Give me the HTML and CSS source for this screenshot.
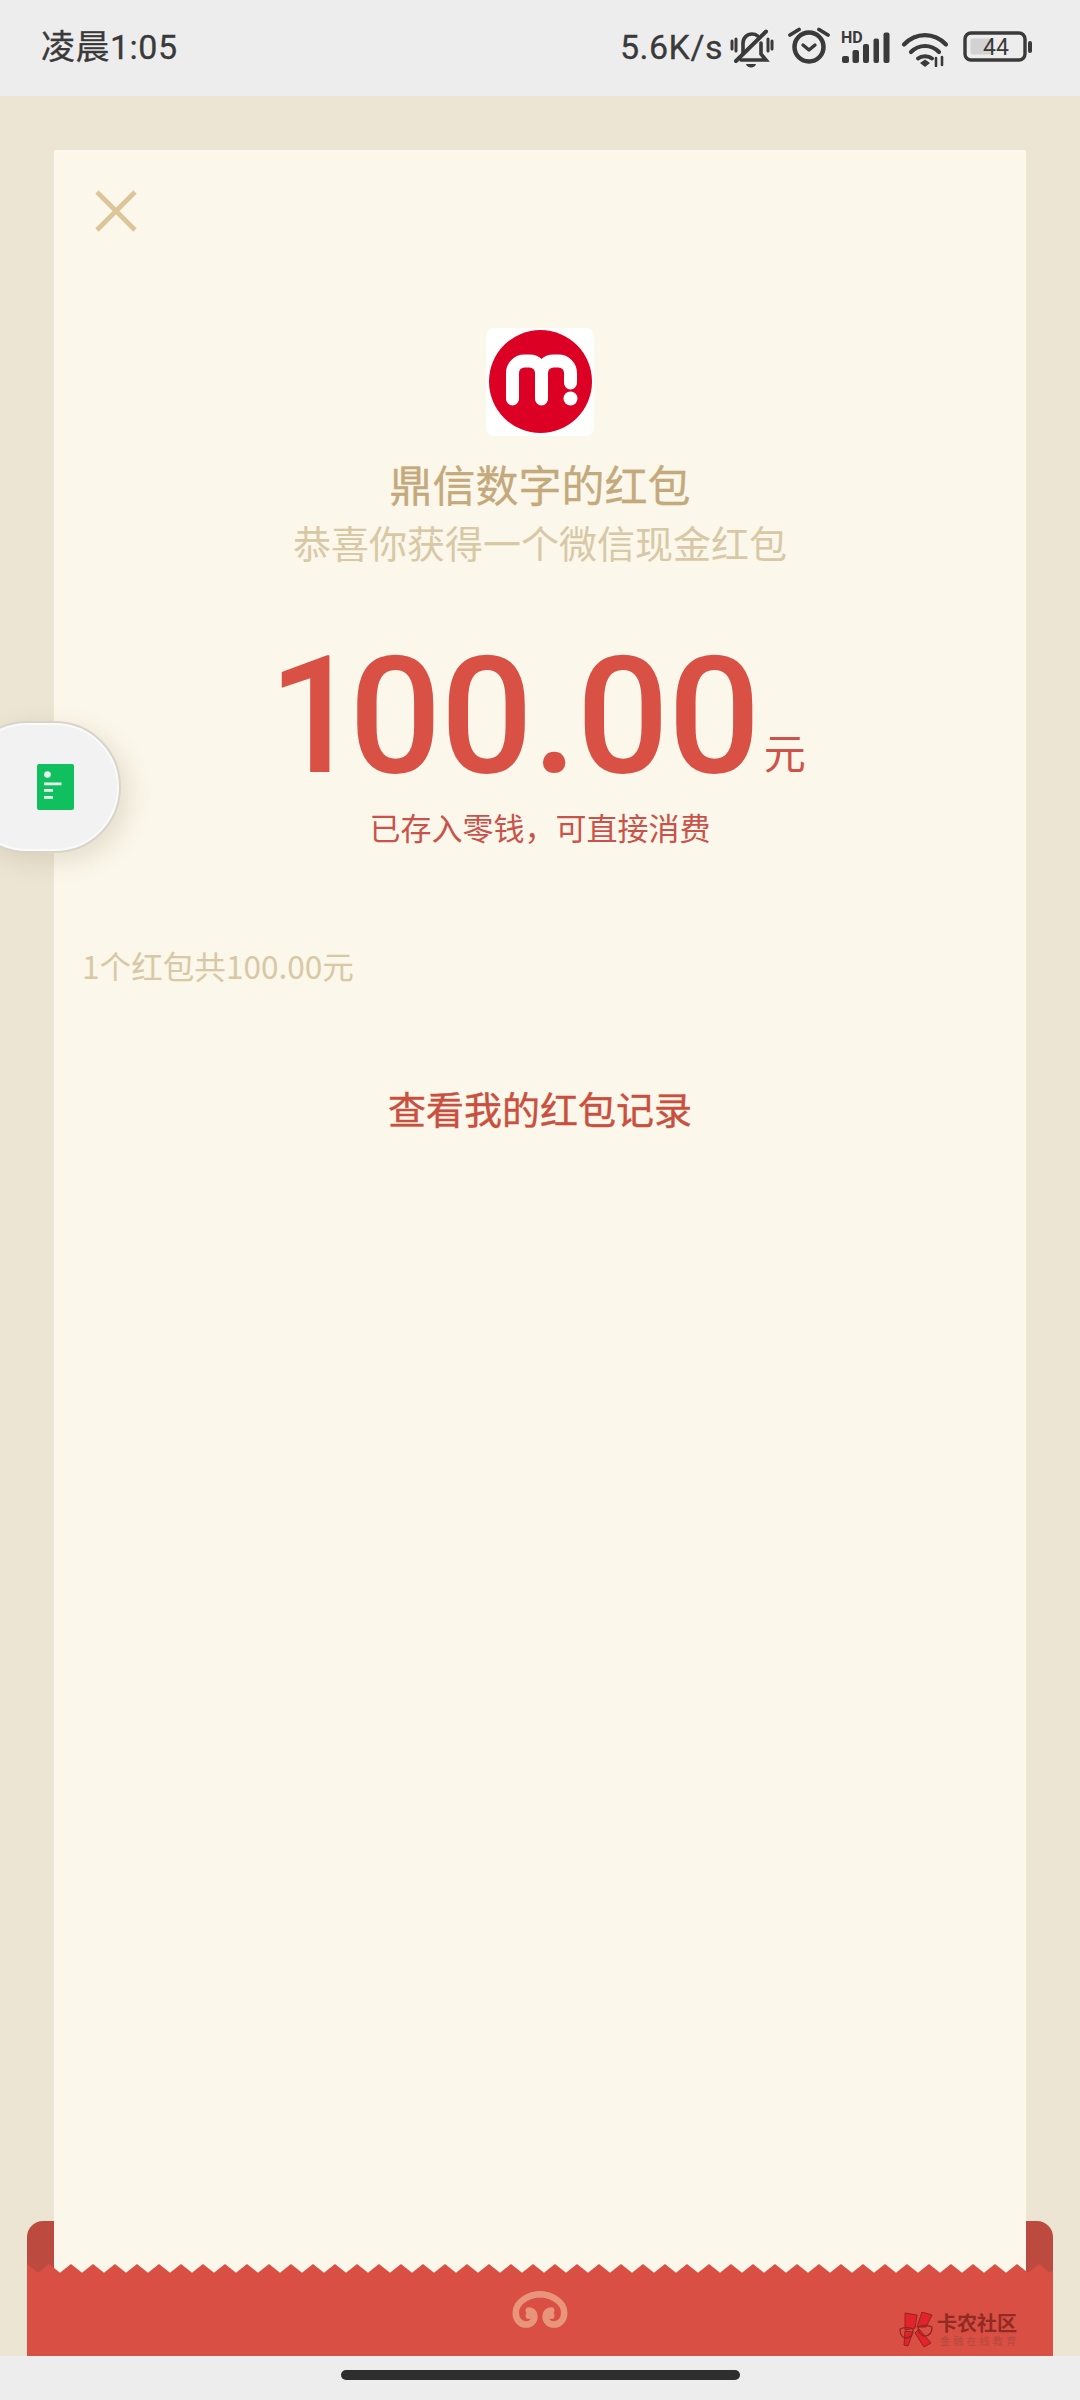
FILE: index.html
```html
<!DOCTYPE html>
<html lang="zh-CN">
<head>
<meta charset="utf-8">
<title>微信红包</title>
<link rel="stylesheet" href="styles.css">
</head>
<body>
<div class="phone">
  <header class="status">
    <span class="time">凌晨1:05</span>
    <div class="status-right">
      <span class="speed">5.6K/s</span>
      <svg class="ic-bell" viewBox="0 0 48 42" fill="none" stroke="#3a3a3a" stroke-linecap="round">
        <path d="M4 13v8M8 11v12M40 11v12M44 13v8" stroke-width="3"/>
        <path d="M15 26V15c0-5 4-9 9-9 2 0 4 .6 5.500 1.800M33 15v11l5 6H13" stroke-width="3.600"/>
        <path d="M8 33 38 3.500" stroke-width="4"/>
        <path d="M18 36h10c-.5 2-2.500 3.500-5 3.500s-4.500-1.500-5-3.500z" fill="#3a3a3a" stroke="none"/>
      </svg>
      <svg class="ic-alarm" viewBox="0 0 46 40" fill="none" stroke="#3a3a3a" stroke-linecap="round">
        <circle cx="23" cy="20" r="14.500" stroke-width="4.500"/>
        <path d="M4 8 13 2.500M33 2.500 42 8" stroke-width="3.800"/>
        <path d="M17 18 23 23 29 18" stroke-width="3.400" stroke-linejoin="round"/>
      </svg>
      <svg class="ic-signal" viewBox="0 0 50 34" fill="#3a3a3a">
        <text class="hd" x="1" y="13">HD</text>
        <rect x="2" y="26" width="7" height="7" rx="2"/>
        <rect x="12.500" y="20" width="6.500" height="13" rx="2"/>
        <rect x="23" y="14" width="6" height="19" rx="2"/>
        <rect x="33.500" y="8.500" width="5.500" height="24.500" rx="2"/>
        <rect x="43.500" y="2.500" width="6" height="30.500" rx="2"/>
      </svg>
      <svg class="ic-wifi" viewBox="0 0 48 36" fill="none" stroke="#3a3a3a" stroke-linecap="round">
        <path d="M3 13.500C15 1 33 1 45 13.500" stroke-width="4.200"/>
        <path d="M10 21c8-8 20-8 28 0" stroke-width="4.200"/>
        <path d="M17 27.500c3.500-3 10.500-3 14 0" stroke-width="4"/>
        <path d="M24 28.500 29 32 24 36 19 32z" fill="#3a3a3a" stroke="none"/>
        <path d="M35 27v8M41 26v8" stroke-width="2.600"/>
      </svg>
      <svg class="ic-batt" viewBox="0 0 70 32">
        <rect x="2" y="2" width="60" height="27" rx="6" fill="none" stroke="#3a3a3a" stroke-width="3.400"/>
        <rect x="7.500" y="7.500" width="21" height="16" rx="2" fill="#d2d2d2"/>
        <rect x="65" y="10" width="4" height="12" rx="2" fill="#3a3a3a"/>
        <text class="batt-num" x="33" y="24" text-anchor="middle">44</text>
      </svg>
    </div>
  </header>

  <main class="sheet">
    <div class="band-back"></div>
    <section class="card">
      <svg class="close" viewBox="0 0 42 42" fill="none" stroke="#dcc599" stroke-width="4.600">
        <path d="M2 2 40 40M40 2 2 40"/>
      </svg>
      <div class="logo">
        <svg viewBox="0 0 108 108" width="108" height="108">
          <circle cx="54.500" cy="53.500" r="51.500" fill="#dc0025"/>
          <path d="M26.500 71V45a12 12 0 0 1 12-12h5a12 12 0 0 1 12 12v26M55.500 45a12 12 0 0 1 12-12h5a12 12 0 0 1 12 12v10" fill="none" stroke="#fff" stroke-width="13" stroke-linecap="round"/>
          <circle cx="84.500" cy="70.500" r="7" fill="#fff"/>
        </svg>
      </div>
      <h1 class="title">鼎信数字的红包</h1>
      <p class="subtitle">恭喜你获得一个微信现金红包</p>
      <div class="amount-row">
        <span class="amount"><span class="amount-one">1</span>00.00</span>
        <span class="unit">元</span>
      </div>
      <p class="note">已存入零钱，可直接消费</p>
      <p class="summary">1个红包共100.00元</p>
      <a class="record">查看我的红包记录</a>
    </section>
    <div class="band">
      <svg class="band-shape" width="1026" height="92">
        <defs>
          <pattern id="zig" width="22" height="92" patternUnits="userSpaceOnUse">
            <path d="M0 0 11 8.700 22 0V92H0z" fill="#d94f43"/>
          </pattern>
        </defs>
        <rect width="1026" height="92" fill="url(#zig)"/>
      </svg>
      <svg class="swirl" viewBox="0 0 60 44" fill="none" stroke="#e9957b" stroke-width="7" stroke-linecap="round">
        <path d="M30 3C21 3 4 9 4 23c0 8 6 12.500 11 12.500 5.500 0 9-4 9-9 0-4-3-6-6-6"/>
        <path d="M30 3c9 0 26 6 26 20 0 8-6 12.500-11 12.500-5.500 0-9-4-9-9 0-4 3-6 6-6"/>
        <circle cx="18" cy="26" r="3.500" fill="#e9957b" stroke="none"/>
        <circle cx="42" cy="26" r="3.500" fill="#e9957b" stroke="none"/>
      </svg>
      <div class="mark">
        <svg class="mark-logo" viewBox="0 0 36 36">
          <path d="M6 1 18 3 16 16 6 18z" fill="#e2232b" stroke="#93261f" stroke-width="1"/>
          <path d="M23 0 33 3 27 15 18 15z" fill="#e2232b" stroke="#93261f" stroke-width="1"/>
          <path d="M6 19 14 20 9 34 5 33zM16 21 20 17 32 31 25 35z" fill="#e2232b" stroke="#93261f" stroke-width="1"/>
          <path d="M1 17c4-2 10-2 13 0 0 6-3 9-7 9s-6-4-6-9zM19 15c4-2 10-2 14 0 0 6-3 9-7 9s-7-4-7-9z" fill="none" stroke="#93261f" stroke-width="1.300"/>
        </svg>
        <div class="mark-text">
          <span class="mark-name">卡农社区</span>
          <span class="mark-sub">金融在线教育</span>
        </div>
      </div>
    </div>
  </main>

  <footer class="navbar"><span class="home-pill"></span></footer>

  <aside class="float-pill">
    <svg class="float-icon" viewBox="0 0 37 46">
      <rect width="37" height="46" rx="2" fill="#10bf5e"/>
      <circle cx="10.500" cy="10.500" r="3.300" fill="#e8f8ee"/>
      <path d="M7 18.500h17.500v2.800H7zM7 25h9v2.800H7zM7 32h9v2.800H7z" fill="#e8f8ee"/>
    </svg>
  </aside>
</div>
</body>
</html>
```
FILE: styles.css
```css
* { box-sizing: border-box; }
html, body { margin: 0; padding: 0; }
body { font-family: "Noto Sans CJK SC", "Noto Sans", sans-serif; background: #ededed; }
p, h1 { margin: 0; font-weight: 400; }

.phone { position: relative; width: 1080px; height: 2400px; overflow: hidden; display: flex; flex-direction: column; background: #ededed; }

/* status bar */
.status { height: 96px; flex: none; display: flex; align-items: center; justify-content: space-between; padding: 0 47px 2px 41px; color: #3a3a3a; }
.time { font-family: Roboto, "Noto Sans CJK SC", sans-serif; font-size: 34px; line-height: 40px; font-weight: 400; letter-spacing: .5px; -webkit-text-stroke: .3px #3a3a3a; }
.status-right { display: flex; align-items: center; }
.speed { font-family: Roboto, sans-serif; font-size: 34px; line-height: 40px; letter-spacing: .5px; margin-right: 5px; -webkit-text-stroke: .3px #3a3a3a; }
.ic-bell { width: 48px; height: 42px; margin-right: 10px; margin-top: 4px; }
.ic-alarm { width: 46px; height: 40px; margin-right: 8px; margin-top: 0; }
.ic-signal { width: 50px; height: 34px; margin-right: 11px; overflow: visible; }
.ic-wifi { width: 48px; height: 36px; margin-right: 14px; margin-top: 4px; }
.ic-batt { width: 70px; height: 32px; margin-top: -1px; }
.hd { font-family: Roboto, sans-serif; font-size: 16px; font-weight: 700; }
.batt-num { font-family: Roboto, sans-serif; font-size: 23px; fill: #3a3a3a; }

/* body */
.sheet { position: relative; flex: 1; display: flex; flex-direction: column; padding-top: 54px; background: #ece5d3; }
.band-back { position: absolute; left: 27px; right: 27px; bottom: 60px; height: 75px; background: #bd4a3e; border-radius: 16px 16px 0 0; }

.card { position: relative; z-index: 1; flex: 1; margin: 0 54px -9px; padding-top: 178px; display: flex; flex-direction: column; align-items: center; background: #fbf7ea; }
.close { position: absolute; left: 41px; top: 40px; width: 42px; height: 42px; }
.logo { width: 108px; height: 108px; background: #fff; border-radius: 8px; }
.logo svg { display: block; }
.title { margin-top: 16px; font-size: 43px; line-height: 63px; color: #c4a97c; -webkit-text-stroke: .3px #c4a97c; }
.subtitle { font-size: 38px; line-height: 54px; color: #d8c8a6; }
.amount-row { margin: 73px 6px 0 0; display: flex; align-items: flex-end; gap: 4px; height: 150px; }
.amount { font-family: Roboto, sans-serif; font-size: 163px; line-height: 150px; font-weight: 500; letter-spacing: -1px; color: #d95045; }
.amount-one { letter-spacing: -12px; }
.unit { font-size: 42px; line-height: 50px; margin-bottom: 16px; color: #d0534a; }
.note { margin-top: 13px; font-size: 31px; line-height: 44px; color: #c9524a; }
.summary { align-self: flex-start; margin: 93px 0 0 28px; font-size: 31.600px; line-height: 46px; color: #d8c8a5; }
.record { margin-top: 92px; font-size: 38px; line-height: 56px; color: #c9503f; -webkit-text-stroke: .4px #c9503f; }

/* red band */
.band { position: relative; z-index: 2; flex: none; height: 92px; margin: 0 27px; }
.band-shape { display: block; }
.swirl { position: absolute; left: 485px; top: 27px; width: 56px; height: 42px; }
.mark { position: absolute; left: 872px; top: 48px; display: flex; align-items: flex-start; gap: 2px; }
.mark-logo { width: 36px; height: 36px; flex: none; }
.mark-text { display: flex; flex-direction: column; }
.mark-name { font-size: 20px; line-height: 22px; font-weight: 700; color: #8f2a24; }
.mark-sub { font-size: 10px; line-height: 14px; letter-spacing: 3.200px; color: #b5493e; padding-left: 3px; }

/* nav */
.navbar { flex: none; height: 44px; display: flex; justify-content: center; padding-top: 14px; }
.home-pill { width: 399px; height: 10px; border-radius: 5px; background: #2e2e2e; }

/* floating pill */
.float-pill { position: absolute; z-index: 3; left: -39px; top: 721px; width: 160px; height: 132px; display: flex; align-items: center; padding-left: 74px; border-radius: 66px; background: #f2f2f2; border: 2px solid #d9d4c8; box-shadow: inset 0 0 0 2px #fafafa, 8px 8px 24px rgba(110, 95, 60, .16); }
.float-icon { width: 37px; height: 46px; }
```
